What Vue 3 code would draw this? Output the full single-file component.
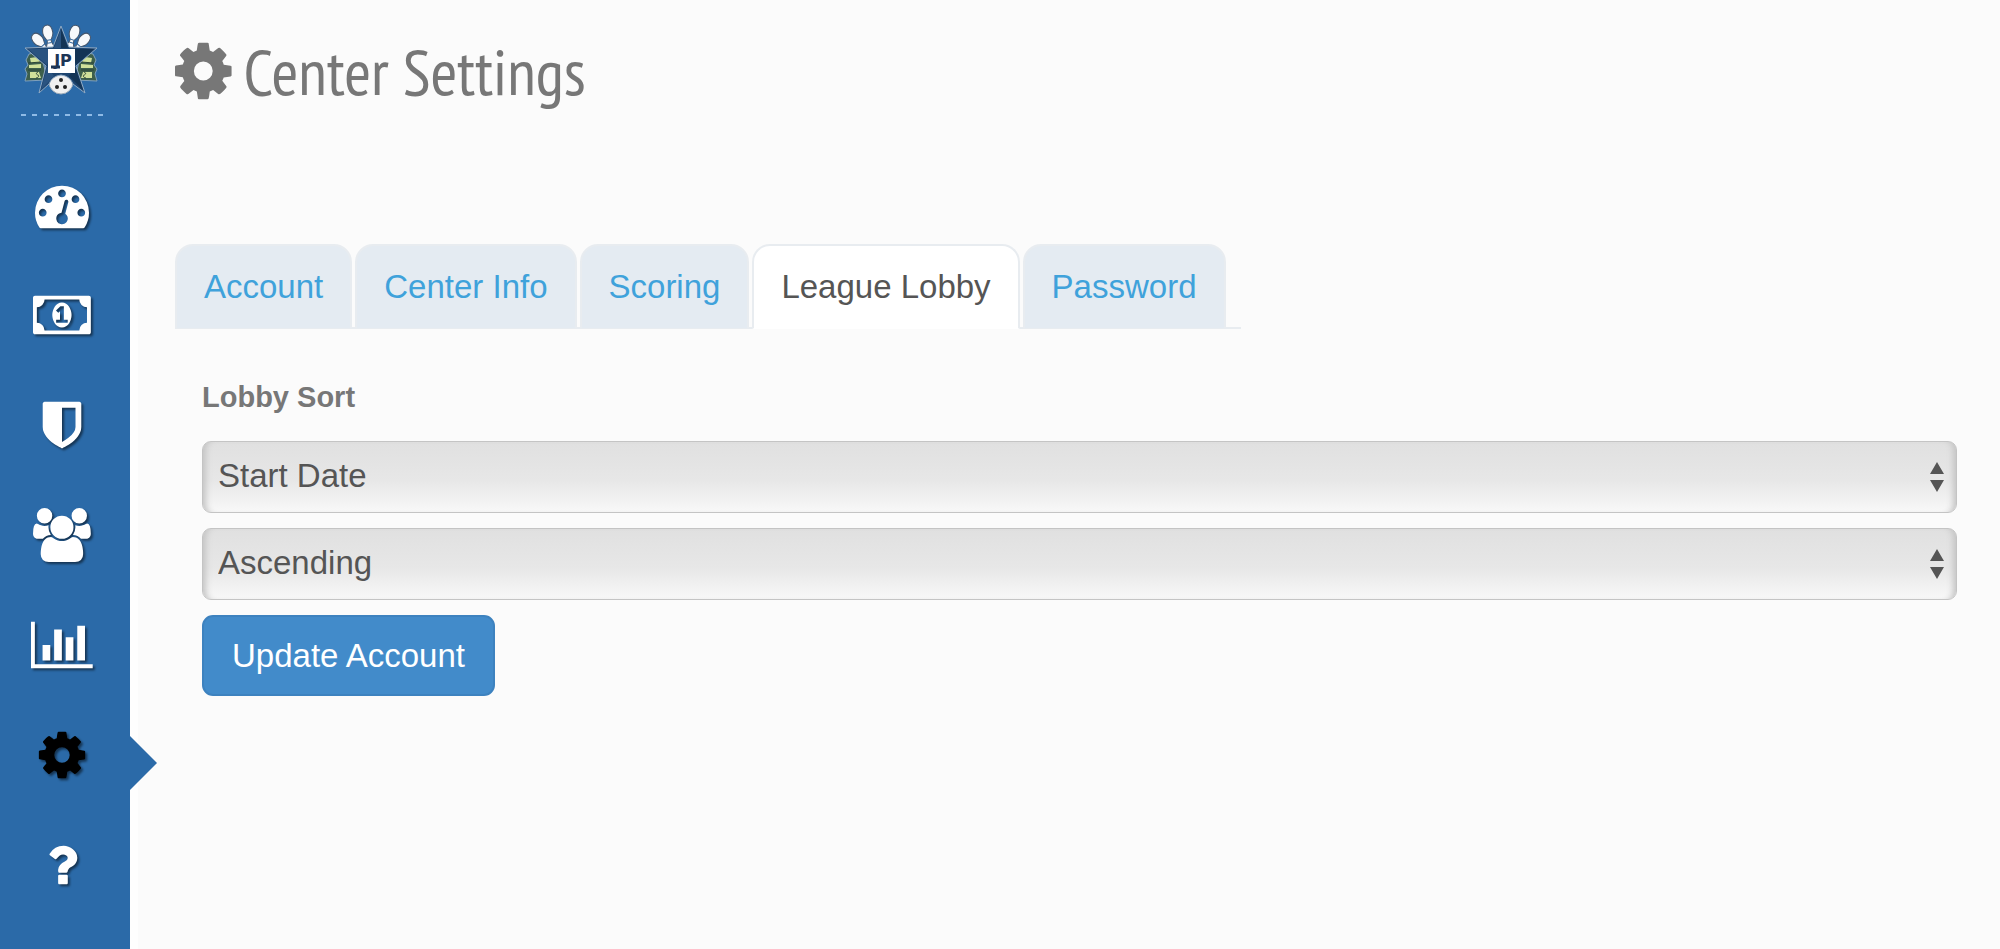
<template>
  <div class="layout">
    <aside class="sidebar">
      <a href="#" class="logo" aria-label="Home">
        <svg viewBox="0 0 76 72">
          <g fill="#3d5f4c" stroke="#7fa0bd" stroke-width="1">
            <path d="M5 30l12-2 6 28-22 1 2-7-2-5 3-4-2-5z" />
            <path d="M69 30l-12-2-6 28 22 1-2-7 2-5-3-4 2-5z" />
          </g>
          <g fill="#cfe09a">
            <path d="M6 34l7-1 3 5-9 1zM5 41l12-1v4H5zM6 48h9l2 6H6z" />
            <path d="M68 34l-7-1-3 5 9 1zM69 41l-12-1v4h12zM68 48h-9l-2 6h11z" />
          </g>
          <g fill="none" stroke="#2b4436" stroke-width="1">
            <path d="M4 39l13-1M4 46h13M14 48c-3 1-1 3 0 3s1 3-2 3" />
            <path d="M70 39l-13-1M70 46H57M60 48c3 1 1 3 0 3s-1 3 2 3" />
          </g>
          <g v-for="pin in pins" :key="pin" :transform="pin">
            <path
              d="M0-9c4 0 5 4 5 8 0 4-3 6-3 8 0 3 2 4 2 8h-8c0-4 2-5 2-8 0-2-3-4-3-8 0-4 1-8 5-8z"
              fill="#f7f9fb"
              stroke="#44556b"
              stroke-width="1"
            />
            <path d="M-3 6h6M-2 9h4" stroke="#35679b" stroke-width="1" />
          </g>
          <circle cx="37" cy="58" r="12" fill="#f0f0f0" stroke="#9aa9b8" />
          <path
            d="M37 2L45 23 73 24 52 42 61 69 49 60Q46 52 37 51Q28 52 25 60L15 69 22 42 1 24 29 23z"
            fill="#1d446f"
            stroke="#8fa9c3"
            stroke-width="1"
          />
          <path d="M37 5v19L30 24zM4 25l25 0-6 16zM17 66l6-23 7 9z" fill="#2a5380" />
          <path d="M37 5v19h7zM70 25H46l6 16zM59 66l-8-23-6 9z" fill="#143455" />
          <rect x="24" y="25" width="27" height="24" fill="#fff" />
          <text x="39" y="42" text-anchor="middle">JP</text>
          <path d="M27 43h9" stroke="#1d3556" stroke-width="3" />
          <g fill="#222">
            <circle cx="37" cy="56" r="2" />
            <circle cx="33" cy="63" r="2" />
            <circle cx="41" cy="63" r="2" />
          </g>
        </svg>
      </a>
      <div class="divider"></div>
      <nav class="menu">
        <a
          v-for="item in menu"
          :key="item.name"
          href="#"
          class="menu-item"
          :class="{ active: item.name === 'Settings' }"
          :aria-label="item.name"
        >
          <svg :viewBox="`0 0 ${item.width} 1792`">
            <path :d="item.path" />
          </svg>
        </a>
      </nav>
    </aside>

    <main class="content">
      <h1 class="title">
        <svg viewBox="128 0 1536 1792"><path :d="cog" /></svg>
        <span>Center Settings</span>
      </h1>

      <ul class="tabs">
        <li v-for="tab in tabs" :key="tab">
          <a
            href="#"
            class="tab"
            :class="{ active: tab === activeTab }"
            @click.prevent="activeTab = tab"
          >{{ tab }}</a>
        </li>
      </ul>

      <form class="form" @submit.prevent>
        <label for="sort-field">Lobby Sort</label>
        <div class="select-wrap">
          <select id="sort-field" v-model="sortField">
            <option>Start Date</option>
            <option>Name</option>
          </select>
          <svg class="arrows" viewBox="0 0 14 30">
            <path d="M7 0l7 12H0zM7 30l7-12H0z" />
          </svg>
        </div>
        <div class="select-wrap">
          <select v-model="sortOrder" aria-label="Sort order">
            <option>Ascending</option>
            <option>Descending</option>
          </select>
          <svg class="arrows" viewBox="0 0 14 30">
            <path d="M7 0l7 12H0zM7 30l7-12H0z" />
          </svg>
        </div>
        <button type="submit" class="btn">Update Account</button>
      </form>
    </main>
  </div>
</template>

<script setup>
import { ref } from 'vue';

const tabs = ['Account', 'Center Info', 'Scoring', 'League Lobby', 'Password'];
const activeTab = ref('League Lobby');
const sortField = ref('Start Date');
const sortOrder = ref('Ascending');

const pins = [
  'translate(15 17) rotate(-42)',
  'translate(24 10) rotate(-10)',
  'translate(59 17) rotate(42)',
  'translate(50 10) rotate(18)',
];

const cog = 'M1152 896q0-106-75-181t-181-75-181 75-75 181 75 181 181 75 181-75 75-181zm512-109v222q0 12-8 23t-20 13l-185 28q-19 54-39 91 35 50 107 138 10 12 10 25t-9 23q-27 37-99 108t-94 71q-12 0-26-9l-138-108q-44 23-91 38-16 136-29 186-7 28-36 28h-222q-14 0-24.5-8.5t-11.5-21.5l-28-184q-49-16-90-37l-141 107q-10 9-25 9-14 0-25-11-126-114-165-168-7-10-7-23 0-12 8-23 15-21 51-66.5t54-70.5q-27-50-41-99l-183-27q-13-2-21-12.5t-8-23.5v-222q0-12 8-23t19-13l186-28q14-46 39-92-40-57-107-138-10-12-10-24 0-10 9-23 26-36 98.5-107.5t94.5-71.5q13 0 26 10l138 107q44-23 91-38 16-136 29-186 7-28 36-28h222q14 0 24.5 8.5t11.5 21.5l28 184q49 16 90 37l142-107q9-9 24-9 13 0 25 10 129 119 165 170 7 8 7 22 0 12-8 23-15 21-51 66.5t-54 70.5q26 50 41 98l183 28q13 2 21 12.5t8 23.5z';

const menu = [
  {
    name: 'Dashboard',
    width: 1792,
    path: 'M384 1152q0-53-37.5-90.5t-90.5-37.5-90.5 37.5-37.5 90.5 37.5 90.5 90.5 37.5 90.5-37.5 37.5-90.5zm192-448q0-53-37.5-90.5t-90.5-37.5-90.5 37.5-37.5 90.5 37.5 90.5 90.5 37.5 90.5-37.5 37.5-90.5zm428 481l101-382q6-26-7.5-48.5t-38.5-29.5-48 6.5-30 39.5l-101 382q-60 5-107 43.5t-63 98.5q-20 77 20 146t117 89 146-20 89-117q16-60-6-117t-72-91zm660-33q0-53-37.5-90.5t-90.5-37.5-90.5 37.5-37.5 90.5 37.5 90.5 90.5 37.5 90.5-37.5 37.5-90.5zm-640-640q0-53-37.5-90.5t-90.5-37.5-90.5 37.5-37.5 90.5 37.5 90.5 90.5 37.5 90.5-37.5 37.5-90.5zm448 192q0-53-37.5-90.5t-90.5-37.5-90.5 37.5-37.5 90.5 37.5 90.5 90.5 37.5 90.5-37.5 37.5-90.5zm320 448q0 261-141 483-19 29-54 29h-1402q-35 0-54-29-141-221-141-483 0-182 71-348t191-286 286-191 348-71 348 71 286 191 191 286 71 348z',
  },
  {
    name: 'Money',
    width: 1920,
    path: 'M768 1152h384v-96h-128v-448h-114l-148 137 77 80q42-37 55-57h2v288h-128v96zm512-256q0 70-21 142t-59.5 134-101.5 101-138 39-138-39-101.5-101-59.5-134-21-142 21-142 59.5-134 101.5-101 138-39 138 39 101.5 101 59.5 134 21 142zm512 256v-512q-106 0-181-75t-75-181h-1152q0 106-75 181t-181 75v512q106 0 181 75t75 181h1152q0-106 75-181t181-75zm128-832v1152q0 26-19 45t-45 19h-1792q-26 0-45-19t-19-45v-1152q0-26 19-45t45-19h1792q26 0 45 19t19 45z',
  },
  {
    name: 'Security',
    width: 1792,
    path: 'M1344 960v-640h-448v1137q119-63 213-137 235-184 235-360zm192-768v768q0 86-33.5 170.5t-83 150-118 127.5-126.5 103-121 77.5-89.5 49.5-42.5 20q-12 6-26 6t-26-6q-16-7-42.5-20t-89.5-49.5-121-77.5-126.5-103-118-127.5-83-150-33.5-170.5v-768q0-26 19-45t45-19h1152q26 0 45 19t19 45z',
  },
  {
    name: 'Users',
    width: 1920,
    path: 'M593 896q-162 5-265 128h-134q-82 0-138-40.5t-56-118.5q0-353 124-353 6 0 43.5 21t97.5 42.5 119 21.5q67 0 133-23-5 37-5 66 0 139 81 256zm1071 637q0 120-73 189.5t-194 69.5h-874q-121 0-194-69.5t-73-189.5q0-53 3.5-103.5t14-109 26.5-108.5 43-97.5 62-81 85.5-53.5 111.5-20q10 0 43 21.5t73 48 107 48 135 21.5 135-21.5 107-48 73-48 43-21.5q61 0 111.5 20t85.5 53.5 62 81 43 97.5 26.5 108.5 14 109 3.5 103.5zm-1024-1277q0 106-75 181t-181 75-181-75-75-181 75-181 181-75 181 75 75 181zm704 384q0 159-112.5 271.5t-271.5 112.5-271.5-112.5-112.5-271.5 112.5-271.5 271.5-112.5 271.5 112.5 112.5 271.5zm576 225q0 78-56 118.5t-138 40.5h-134q-103-123-265-128 81-117 81-256 0-29-5-66 66 23 133 23 59 0 119-21.5t97.5-42.5 43.5-21q124 0 124 353zm-128-609q0 106-75 181t-181 75-181-75-75-181 75-181 181-75 181 75 75 181z',
  },
  {
    name: 'Reports',
    width: 2048,
    path: 'M640 896v512h-256v-512h256zm384-512v1024h-256v-1024h256zm1024 1152v128h-2048v-1536h128v1408h1920zm-640-896v768h-256v-768h256zm384-384v1152h-256v-1152h256z',
  },
  { name: 'Settings', width: 1792, path: cog },
  {
    name: 'Help',
    width: 1792,
    path: 'M1088 1256v240q0 16-12 28t-28 12h-240q-16 0-28-12t-12-28v-240q0-16 12-28t28-12h240q16 0 28 12t12 28zm316-600q0 54-15.5 101t-35 76.5-55 59.5-57.5 43.5-61 35.5q-41 23-68.5 65t-27.5 67q0 17-12 32.5t-28 15.5h-240q-15 0-25.5-18.5t-10.5-37.5v-45q0-83 65-156.5t143-108.5q59-27 84-56t25-76q0-42-46.5-74t-107.5-32q-65 0-108 29-35 25-107 115-13 16-31 16-12 0-25-8l-164-125q-13-10-15.5-25t5.5-28q160-266 464-266 80 0 161 31t146 83 106 127.5 41 158.5z',
  },
];
</script>

<style>
body {
  background: #fbfbfb;
}
</style>

<style scoped>
.layout {
  display: flex;
  min-height: 100vh;
  font-family: 'Helvetica Neue', 'Liberation Sans', Arial, sans-serif;
  font-size: 33px;
  color: #777;
}

.sidebar {
  display: flex;
  flex-direction: column;
  align-items: center;
  flex: none;
  box-sizing: border-box;
  width: 130px;
  padding: 24px 6px 0 0;
  background: #2b6aa8;
}

.logo svg {
  display: block;
  width: 76px;
  height: 72px;
}

.logo text {
  font: bold 16px 'DejaVu Sans', sans-serif;
  fill: #1d3556;
}

.divider {
  width: 82px;
  height: 2px;
  margin-top: 18px;
  background: repeating-linear-gradient(90deg, #8fbbe6 0 5px, transparent 5px 11px);
}

.menu {
  display: flex;
  flex-direction: column;
  align-self: stretch;
  gap: 56px;
  margin-top: 62px;
}

.menu-item {
  position: relative;
  display: flex;
  justify-content: center;
}

.menu-item svg {
  display: block;
  height: 54px;
  overflow: visible;
  fill: #fff;
  filter: drop-shadow(2px 2px 1px rgba(0, 0, 0, 0.5));
}

.menu-item.active svg {
  fill: #000;
}

.menu-item.active::after {
  content: '';
  position: absolute;
  top: 8px;
  left: 130px;
  border: 27px solid transparent;
  border-left-color: #2b6aa8;
  border-right-width: 0;
}

.content {
  flex: 1;
  min-width: 0;
  padding: 32px 16px 0 37px;
  border-left: 8px solid #fefefe;
}

.title {
  display: flex;
  align-items: center;
  gap: 12px;
  margin: 0;
  font: 400 65px/78px 'PT Sans Narrow', 'Liberation Sans Narrow', 'Open Sans', sans-serif;
}

.title svg {
  height: 66px;
  fill: #777;
}

.tabs {
  display: inline-flex;
  gap: 3px;
  margin: 134px 0 0;
  padding: 0 15px 0 0;
  list-style: none;
  border-bottom: 2px solid #e8ecf0;
}

.tab {
  display: block;
  margin-bottom: -2px;
  padding: 20px 27px;
  line-height: 42px;
  color: #3fa2db;
  text-decoration: none;
  background: #e4ebf2;
  border: 2px solid #e8ecf0;
  border-bottom-width: 1px;
  border-radius: 18px 18px 0 0;
}

.tab.active {
  color: #555;
  background: #fff;
  border-bottom-color: #fff;
}

.form {
  display: flex;
  flex-direction: column;
  align-items: flex-start;
  gap: 15px;
  padding: 48px 27px 40px;
}

.form label {
  font-size: 29px;
  font-weight: bold;
  line-height: 40px;
  margin-bottom: 9px;
}

.select-wrap {
  position: relative;
  width: 100%;
}

.form select {
  display: block;
  width: 100%;
  height: 72px;
  padding: 0 48px 3px 15px;
  appearance: none;
  font: inherit;
  color: #555;
  background: linear-gradient(#e0e0e0, #e7e7e7 55%, #f8f8f8);
  border: 1px solid #c4c4c4;
  border-radius: 9px;
  box-shadow: inset 8px 0 6px -5px #c4c4c4, inset -8px 0 6px -5px #c4c4c4;
}

.arrows {
  position: absolute;
  top: 21px;
  right: 13px;
  width: 14px;
  height: 30px;
  fill: #555;
  pointer-events: none;
}

.btn {
  padding: 18px 28px;
  font: inherit;
  line-height: 41px;
  color: #fff;
  background: #428bca;
  border: 2px solid #3d82bf;
  border-radius: 11px;
  cursor: pointer;
}
</style>
